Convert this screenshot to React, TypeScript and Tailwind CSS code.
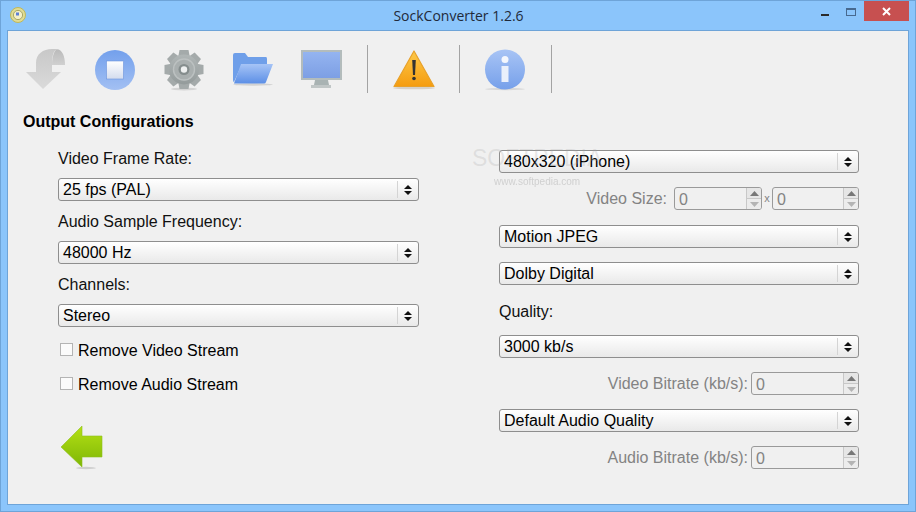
function Select({ value }: { value: string }) {
  return (
    <div className="flex h-[23px] w-full items-center rounded-[3px] border border-[#8e8e8e] bg-gradient-to-b from-[#ffffff] to-[#e9e9e9] pl-[4px] text-black">
      <span className="flex-1 leading-none">{value}</span>
      <span className="h-[17px] w-px bg-[#d4d4d4]" />
      <svg width="20" height="14" viewBox="0 0 20 14" className="shrink-0">
        <path d="M10 2 L14 6 H6 Z M10 12 L14 8 H6 Z" fill="#111" />
      </svg>
    </div>
  )
}

function Spin({ w }: { w: string }) {
  return (
    <div className={`flex h-[23px] items-stretch overflow-hidden rounded-[3px] border border-[#9a9a9a] bg-[#f0f0f0] ${w}`}>
      <span className="flex-1 pl-[4px] pt-[2px] leading-[20px] text-[#838383]">0</span>
      <div className="flex w-[15px] flex-col border-l border-[#c8c8c8]">
        <div className="flex flex-1 items-center justify-center border-b border-[#c8c8c8] bg-[#e6e6e6]">
          <svg width="9" height="5" viewBox="0 0 9 5"><path d="M4.5 0 L9 5 H0 Z" fill="#777" /></svg>
        </div>
        <div className="flex flex-1 items-center justify-center bg-[#ececec]">
          <svg width="9" height="5" viewBox="0 0 9 5"><path d="M4.5 5 L9 0 H0 Z" fill="#b4b4b4" /></svg>
        </div>
      </div>
    </div>
  )
}

function Check({ label }: { label: string }) {
  return (
    <div className="flex h-5 items-center pl-[2px] text-black">
      <span className="-mt-[1px] h-[13px] w-[13px] border border-[#b4b4b4] bg-[#fbfbfb]" />
      <span className="ml-[5px] pt-[2px] leading-5">{label}</span>
    </div>
  )
}

function Sep({ ml }: { ml: string }) {
  return <div className={`mt-[14px] h-[48px] w-px bg-[#a3a3a3] ${ml}`} />
}

function DownIcon() {
  return (
    <svg width="42" height="42" viewBox="0 0 42 42" className="mt-[18px] ml-[15px]">
      <defs>
        <linearGradient id="dg" x1="0" y1="0" x2="0" y2="1">
          <stop offset="0" stopColor="#c8c8c8" />
          <stop offset="1" stopColor="#dadada" />
        </linearGradient>
        <linearGradient id="dc" x1="0" y1="0" x2="0" y2="1">
          <stop offset="0" stopColor="#bababa" />
          <stop offset="1" stopColor="#d0d0d0" />
        </linearGradient>
      </defs>
      <path d="M13 23 V14 C13 5 20 0 29 0 H34 C30 2 29 8 29 16 V23 H38 L20 40 L3 23 Z" fill="url(#dg)" />
      <path d="M29 16 C29 6 32 0.5 34 0.3 C39 0.5 42 7 42 16 Z" fill="url(#dc)" />
    </svg>
  )
}

function StopIcon() {
  return (
    <svg width="42" height="42" viewBox="0 0 42 42" className="mt-[18px] ml-[29px]">
      <defs>
        <linearGradient id="sg" x1="0" y1="0" x2="0" y2="1">
          <stop offset="0" stopColor="#73a0ec" />
          <stop offset="1" stopColor="#a3c0f3" />
        </linearGradient>
        <linearGradient id="sq" x1="0" y1="0" x2="0" y2="1">
          <stop offset="0" stopColor="#ffffff" />
          <stop offset="1" stopColor="#d4dcee" />
        </linearGradient>
      </defs>
      <circle cx="21" cy="21" r="20" fill="url(#sg)" />
      <rect x="12.5" y="12" width="17" height="18" fill="url(#sq)" stroke="#6b93dc" strokeWidth="0.6" />
    </svg>
  )
}

function GearIcon() {
  const teeth = [0, 45, 90, 135, 180, 225, 270, 315]
  return (
    <svg width="42" height="42" viewBox="0 0 42 42" className="mt-[18px] ml-[27px]">
      <defs>
        <linearGradient id="gg" x1="0" y1="0" x2="0" y2="1">
          <stop offset="0" stopColor="#b0b6b6" />
          <stop offset="1" stopColor="#949b9b" />
        </linearGradient>
      </defs>
      <ellipse cx="21" cy="40" rx="13" ry="1.5" fill="#d4d4d4" />
      {teeth.map((a) => (
        <path key={a} d="M16.5 1 H25.5 L27 9 H15 Z" fill="#a4aaaa" transform={`rotate(${a} 21 20.5)`} />
      ))}
      <circle cx="21" cy="20.5" r="15" fill="url(#gg)" />
      <circle cx="21" cy="20.5" r="10.5" fill="#a9afaf" stroke="#bcc1c1" strokeWidth="1.4" />
      <circle cx="21" cy="20.5" r="5.5" fill="#858d8d" />
      <circle cx="21" cy="20.5" r="3.2" fill="#eef0f0" />
    </svg>
  )
}

function FolderIcon() {
  return (
    <svg width="42" height="42" viewBox="0 0 42 42" className="mt-[18px] ml-[27px]">
      <defs>
        <linearGradient id="fg" x1="0" y1="0" x2="0" y2="1">
          <stop offset="0" stopColor="#a6c4f6" />
          <stop offset="1" stopColor="#5c8fe6" />
        </linearGradient>
      </defs>
      <ellipse cx="21" cy="35.5" rx="20" ry="1.2" fill="#d2d2d2" />
      <path d="M1 6 Q1 4 3 4 H13 L16 8 H34 Q35 8 35 10 V15 H10 L2 33 Q1 33 1 31 Z" fill="#6f9fe9" />
      <path d="M9 15 H41 L34 33 Q33.5 34.5 32 34.5 H2 Z" fill="url(#fg)" />
    </svg>
  )
}

function MonitorIcon() {
  return (
    <svg width="42" height="42" viewBox="0 0 42 42" className="mt-[18px] ml-[26px]">
      <defs>
        <linearGradient id="mg" x1="0" y1="0" x2="0" y2="1">
          <stop offset="0" stopColor="#94b4f0" />
          <stop offset="1" stopColor="#7d9fe4" />
        </linearGradient>
      </defs>
      <rect x="1" y="1" width="41" height="30" fill="#b3bcbc" />
      <rect x="3" y="3" width="37" height="26" fill="url(#mg)" />
      <path d="M15 31 H28 L29 36 H14 Z" fill="#a9b3b3" />
      <rect x="11" y="36" width="20" height="3" fill="#c0c6c6" />
    </svg>
  )
}

function WarnIcon() {
  return (
    <svg width="42" height="42" viewBox="0 0 42 42" className="mt-[18px] ml-[25px]">
      <defs>
        <linearGradient id="wg" x1="0" y1="0" x2="0" y2="1">
          <stop offset="0" stopColor="#fdc94a" />
          <stop offset="1" stopColor="#f59c0f" />
        </linearGradient>
      </defs>
      <ellipse cx="21" cy="39" rx="21" ry="1.3" fill="#d5d0c8" />
      <path d="M21 2 L41 37.5 H1 Z" fill="url(#wg)" stroke="#e8a12a" strokeWidth="1.2" strokeLinejoin="round" />
      <path d="M19.2 11 H22.8 L22 26 H20 Z" fill="#333" />
      <circle cx="21" cy="29.5" r="1.8" fill="#333" />
    </svg>
  )
}

function InfoIcon() {
  return (
    <svg width="42" height="42" viewBox="0 0 42 42" className="mt-[18px] ml-[24px]">
      <defs>
        <linearGradient id="ig" x1="0" y1="0" x2="0" y2="1">
          <stop offset="0" stopColor="#a8c4f5" />
          <stop offset="1" stopColor="#76a0ea" />
        </linearGradient>
      </defs>
      <ellipse cx="21" cy="40" rx="20" ry="1.2" fill="#d8d8d8" />
      <circle cx="21" cy="20.5" r="20" fill="url(#ig)" />
      <circle cx="21" cy="10.5" r="3.5" fill="#f4f7fd" />
      <rect x="17.5" y="17" width="7" height="16" fill="#eaf0fb" />
    </svg>
  )
}

function BackArrow() {
  return (
    <svg width="42" height="44" viewBox="0 0 42 44" className="mt-[32px] ml-[3px]">
      <defs>
        <linearGradient id="bg" x1="0" y1="0" x2="0" y2="1">
          <stop offset="0" stopColor="#b4e014" />
          <stop offset="1" stopColor="#7eb606" />
        </linearGradient>
      </defs>
      <ellipse cx="25" cy="42" rx="10" ry="1.2" fill="#cfcfcf" />
      <path d="M0 21 L21 0 V10 H41 V31 H21 V41 Z" fill="url(#bg)" stroke="#8fbf20" strokeWidth="0.6" />
    </svg>
  )
}

function AppIcon() {
  return (
    <svg width="16" height="16" viewBox="0 0 16 16">
      <circle cx="8" cy="8" r="7.5" fill="#e0dc94" stroke="#c0b85a" />
      <circle cx="8" cy="8" r="4.6" fill="#f4f0c8" stroke="#8d8c4c" strokeWidth="0.7" />
      <rect x="6" y="5.5" width="3" height="3" fill="#5f7fd4" />
    </svg>
  )
}

export default function App() {
  return (
    <div className="flex h-[512px] w-[916px] flex-col overflow-hidden border border-[#6ea4d8] bg-[#8bc5fb] font-['Liberation_Sans',sans-serif] text-[16px]">
      {/* title bar */}
      <div className="grid h-[29px] shrink-0 grid-cols-[1fr_auto_1fr]">
        <div className="pl-[9px] pt-[6px]">
          <AppIcon />
        </div>
        <div className="pl-[1px] pt-[5px] font-['Open_Sans',sans-serif] text-[14px] leading-[20px] text-[#1f2a3a]">SockConverter 1.2.6</div>
        <div className="flex justify-end pr-[6px]">
          <div className="mt-[13px] h-[2px] w-[8px] bg-[#2a2a2a]" />
          <div className="ml-[17px] mt-[7px] h-[8px] w-[10px] border border-t-2 border-[#47698f]" />
          <div className="ml-[8px] flex h-[20px] w-[45px] items-center justify-center bg-[#c75050]">
            <svg width="9" height="9" viewBox="0 0 9 9">
              <path d="M1 1 L8 8 M8 1 L1 8" stroke="#fff" strokeWidth="2" />
            </svg>
          </div>
        </div>
      </div>

      {/* window body */}
      <div className="mx-[6px] mb-[6px] flex min-h-0 flex-1 flex-col border border-[#6ea4d8] bg-[#f0f0f0]">
        <div className="flex h-[80px] shrink-0">
          <DownIcon />
          <StopIcon />
          <GearIcon />
          <FolderIcon />
          <MonitorIcon />
          <Sep ml="ml-[25px]" />
          <WarnIcon />
          <Sep ml="ml-[24px]" />
          <InfoIcon />
          <Sep ml="ml-[25px]" />
        </div>
        <h1 className="ml-[15px] h-5 text-[16px] font-bold leading-[22px] text-black">Output Configurations</h1>

        <div className="relative mt-[17px] flex">
          <div className="ml-[50px] flex w-[361px] flex-col">
            <div className="h-5 leading-[22px] text-[#111]">Video Frame Rate:</div>
            <div className="mt-[10px]"><Select value="25 fps (PAL)" /></div>
            <div className="mt-[10px] h-5 leading-[22px] text-[#111]">Audio Sample Frequency:</div>
            <div className="mt-[10px]"><Select value="48000 Hz" /></div>
            <div className="mt-[10px] h-5 leading-[22px] text-[#111]">Channels:</div>
            <div className="mt-[10px]"><Select value="Stereo" /></div>
            <div className="mt-[13px]"><Check label="Remove Video Stream" /></div>
            <div className="mt-[14px]"><Check label="Remove Audio Stream" /></div>
            <BackArrow />
          </div>

          <div className="ml-[80px] flex w-[360px] flex-col pt-[2px]">
            <Select value="480x320 (iPhone)" />
            <div className="mt-[14px] flex h-[23px] items-center justify-end text-[#838383]">
              <span>Video Size:</span>
              <div className="ml-[7px]"><Spin w="w-[88px]" /></div>
              <span className="mx-[2px] w-[6px] text-center text-[11px]">x</span>
              <Spin w="w-[87px]" />
            </div>
            <div className="mt-[15px]"><Select value="Motion JPEG" /></div>
            <div className="mt-[14px]"><Select value="Dolby Digital" /></div>
            <div className="mt-[16px] h-5 leading-[22px] text-[#111]">Quality:</div>
            <div className="mt-[14px]"><Select value="3000 kb/s" /></div>
            <div className="mt-[14px] flex h-[23px] items-center justify-end text-[#838383]">
              <span>Video Bitrate (kb/s):</span>
              <div className="ml-[3px]"><Spin w="w-[108px]" /></div>
            </div>
            <div className="mt-[14px]"><Select value="Default Audio Quality" /></div>
            <div className="mt-[14px] flex h-[23px] items-center justify-end text-[#838383]">
              <span>Audio Bitrate (kb/s):</span>
              <div className="ml-[3px]"><Spin w="w-[108px]" /></div>
            </div>
          </div>

          {/* softpedia watermark, lies over the first select */}
          <div className="pointer-events-none absolute left-[464px] top-[-2px] text-[23px] leading-[24px] text-[#a8a8a8]/25">SOFTPEDIA</div>
          <div className="pointer-events-none absolute left-[486px] top-[28px] text-[10px] leading-3 text-[#d0d0d0] blur-[0.4px]">www.softpedia.com</div>
        </div>
      </div>
    </div>
  )
}
